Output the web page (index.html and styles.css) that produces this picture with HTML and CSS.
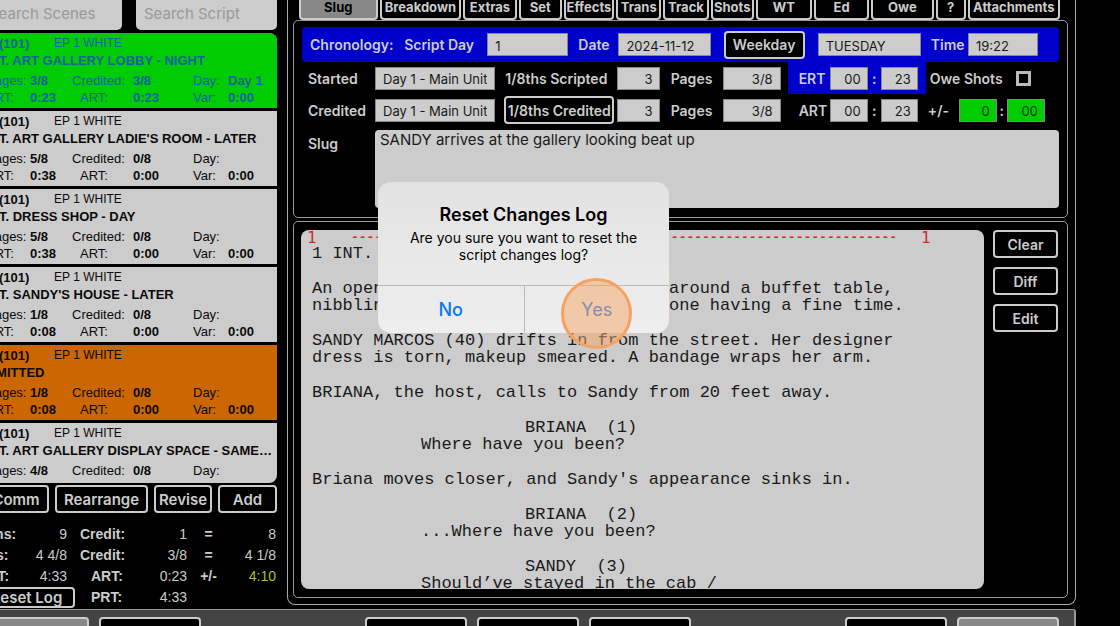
FILE: index.html
```html
<!DOCTYPE html>
<html lang="en">
<head>
<meta charset="utf-8">
<title>Script Log</title>
<link rel="stylesheet" href="styles.css">
</head>
<body>
<div class="workspace">
  <aside class="sidebar">
    <div class="search-row">
      <input class="search" type="search" placeholder="Search Scenes" aria-label="Search Scenes">
      <input class="search" type="search" placeholder="Search Script" aria-label="Search Script">
    </div>
    <ul class="scenes">
      <li class="scene scene-active">
        <div class="scene-meta"><b>(101)</b><span>EP 1 WHITE</span></div>
        <h3 class="scene-title">INT. ART GALLERY LOBBY - NIGHT</h3>
        <div class="scene-data">
          <span>Pages:</span><b>3/8</b><span>Credited:</span><b>3/8</b><span>Day:</span><b>Day 1</b>
          <span>ERT:</span><b>0:23</b><span class="inset">ART:</span><b>0:23</b><span>Var:</span><b>0:00</b>
        </div>
      </li>
      <li class="scene">
        <div class="scene-meta"><b>(101)</b><span>EP 1 WHITE</span></div>
        <h3 class="scene-title">INT. ART GALLERY LADIE'S ROOM - LATER</h3>
        <div class="scene-data">
          <span>Pages:</span><b>5/8</b><span>Credited:</span><b>0/8</b><span>Day:</span><b></b>
          <span>ERT:</span><b>0:38</b><span class="inset">ART:</span><b>0:00</b><span>Var:</span><b>0:00</b>
        </div>
      </li>
      <li class="scene">
        <div class="scene-meta"><b>(101)</b><span>EP 1 WHITE</span></div>
        <h3 class="scene-title">INT. DRESS SHOP - DAY</h3>
        <div class="scene-data">
          <span>Pages:</span><b>5/8</b><span>Credited:</span><b>0/8</b><span>Day:</span><b></b>
          <span>ERT:</span><b>0:38</b><span class="inset">ART:</span><b>0:00</b><span>Var:</span><b>0:00</b>
        </div>
      </li>
      <li class="scene">
        <div class="scene-meta"><b>(101)</b><span>EP 1 WHITE</span></div>
        <h3 class="scene-title">INT. SANDY'S HOUSE - LATER</h3>
        <div class="scene-data">
          <span>Pages:</span><b>1/8</b><span>Credited:</span><b>0/8</b><span>Day:</span><b></b>
          <span>ERT:</span><b>0:08</b><span class="inset">ART:</span><b>0:00</b><span>Var:</span><b>0:00</b>
        </div>
      </li>
      <li class="scene scene-omitted">
        <div class="scene-meta"><b>(101)</b><span>EP 1 WHITE</span></div>
        <h3 class="scene-title">OMITTED</h3>
        <div class="scene-data">
          <span>Pages:</span><b>1/8</b><span>Credited:</span><b>0/8</b><span>Day:</span><b></b>
          <span>ERT:</span><b>0:08</b><span class="inset">ART:</span><b>0:00</b><span>Var:</span><b>0:00</b>
        </div>
      </li>
      <li class="scene">
        <div class="scene-meta"><b>(101)</b><span>EP 1 WHITE</span></div>
        <h3 class="scene-title">INT. ART GALLERY DISPLAY SPACE - SAME…</h3>
        <div class="scene-data">
          <span>Pages:</span><b>4/8</b><span>Credited:</span><b>0/8</b><span>Day:</span><b></b>
        </div>
      </li>
    </ul>
    <div class="scene-actions">
      <button class="btn">Comm</button>
      <button class="btn">Rearrange</button>
      <button class="btn">Revise</button>
      <button class="btn">Add</button>
    </div>
    <div class="stats">
      <b>Scns:</b><span class="num">9</span><b>Credit:</b><span class="num">1</span><b class="sign">=</b><span class="num">8</span>
      <b>Pgs:</b><span class="num">4 4/8</span><b>Credit:</b><span class="num">3/8</span><b class="sign">=</b><span class="num">4 1/8</span>
      <b>ERT:</b><span class="num">4:33</span><b class="inset">ART:</b><span class="num">0:23</span><b class="sign">+/-</b><span class="num ahead">4:10</span>
      <button class="btn reset">Reset Log</button><b class="inset">PRT:</b><span class="num">4:33</span>
    </div>
  </aside>

  <main class="main">
    <nav class="tabs">
      <button class="tab tab-on">Slug</button>
      <button class="tab">Breakdown</button>
      <button class="tab">Extras</button>
      <button class="tab">Set</button>
      <button class="tab">Effects</button>
      <button class="tab">Trans</button>
      <button class="tab">Track</button>
      <button class="tab">Shots</button>
      <button class="tab">WT</button>
      <button class="tab">Ed</button>
      <button class="tab">Owe</button>
      <button class="tab">?</button>
      <button class="tab">Attachments</button>
    </nav>

    <section class="panel details">
      <div class="chrono">
        <span>Chronology:</span>
        <label for="day">Script Day</label>
        <input id="day" class="field" value="1">
        <label class="chrono-label" for="date">Date</label>
        <input id="date" class="field" value="2024-11-12">
        <button class="btn weekday">Weekday</button>
        <input class="field" value="TUESDAY" aria-label="Weekday">
        <label class="chrono-label" for="time">Time</label>
        <input id="time" class="field" value="19:22">
      </div>
      <div class="line">
        <label for="started">Started</label>
        <input id="started" class="field" value="Day 1 - Main Unit">
        <label class="mid" for="scripted">1/8ths Scripted</label>
        <input id="scripted" class="field right" value="3">
        <label class="mid" for="pages1">Pages</label>
        <input id="pages1" class="field right" value="3/8">
        <div class="clock clock-on">
          <label for="ertm">ERT</label>
          <input id="ertm" class="field right" value="00"><span class="mid">:</span><input class="field right" value="23" aria-label="ERT seconds">
        </div>
        <div class="extra">
          <label for="owe">Owe Shots</label>
          <input id="owe" class="check" type="checkbox">
        </div>
      </div>
      <div class="line">
        <label for="credited">Credited</label>
        <input id="credited" class="field" value="Day 1 - Main Unit">
        <button class="btn eighths">1/8ths Credited</button>
        <input class="field right" value="3" aria-label="1/8ths Credited">
        <label class="mid" for="pages2">Pages</label>
        <input id="pages2" class="field right" value="3/8">
        <div class="clock">
          <label for="artm">ART</label>
          <input id="artm" class="field right" value="00"><span class="mid">:</span><input class="field right" value="23" aria-label="ART seconds">
        </div>
        <div class="extra variance">
          <label for="varm">+/-</label>
          <input id="varm" class="field right good" value="0"><span class="mid">:</span><input class="field right good" value="00" aria-label="Variance seconds">
        </div>
      </div>
      <div class="slug">
        <label for="slug">Slug</label>
        <textarea id="slug" class="slug-text">SANDY arrives at the gallery looking beat up</textarea>
      </div>
    </section>

    <section class="panel script-panel">
      <article class="script">
        <div class="log-line"><span>1</span><span class="dashes">----------------------------------------------------------------------</span><span>1</span></div>
        <p>1 INT. ART GALLERY LOBBY - NIGHT</p>
        <p>An open loft. Guests have gathered around a buffet table,
nibbling on fruit and cheese. Everyone having a fine time.</p>
        <p>SANDY MARCOS (40) drifts in from the street. Her designer
dress is torn, makeup smeared. A bandage wraps her arm.</p>
        <p>BRIANA, the host, calls to Sandy from 20 feet away.</p>
        <div class="speech"><p class="cue">BRIANA  (1)</p><p>Where have you been?</p></div>
        <p>Briana moves closer, and Sandy's appearance sinks in.</p>
        <div class="speech"><p class="cue">BRIANA  (2)</p><p>...Where have you been?</p></div>
        <div class="speech"><p class="cue">SANDY  (3)</p><p>Should’ve stayed in the cab /</p></div>
      </article>
      <div class="script-actions">
        <button class="btn">Clear</button>
        <button class="btn">Diff</button>
        <button class="btn">Edit</button>
      </div>
    </section>
  </main>
</div>

<footer class="dock">
  <div class="dock-group"><button class="dock-btn dock-on" aria-label="Dock 1"></button><button class="dock-btn" aria-label="Dock 2"></button></div>
  <div class="dock-group dock-mid"><button class="dock-btn" aria-label="Dock 3"></button><button class="dock-btn" aria-label="Dock 4"></button><button class="dock-btn" aria-label="Dock 5"></button></div>
  <div class="dock-group"><button class="dock-btn" aria-label="Dock 6"></button><button class="dock-btn dock-on" aria-label="Dock 7"></button></div>
</footer>

<div class="alert" role="alertdialog" aria-labelledby="alert-title" aria-describedby="alert-text">
  <div class="alert-body">
    <h2 id="alert-title" class="alert-title">Reset Changes Log</h2>
    <p id="alert-text" class="alert-text">Are you sure you want to reset the<br>script changes log?</p>
  </div>
  <div class="alert-actions">
    <button class="alert-btn">No</button>
    <button class="alert-btn">Yes<span class="tap"></span></button>
  </div>
</div>
</body>
</html>
```

FILE: styles.css
```css
* { box-sizing: border-box; }

body {
  margin: 0;
  height: 100vh;
  overflow: hidden;
  display: flex;
  flex-direction: column;
  background: #000;
  color: #ccc;
  font: 600 14px/17px Inter, "Liberation Sans", sans-serif;
}

h2, h3, p, ul { margin: 0; padding: 0; }
button, input, textarea { font: inherit; color: inherit; margin: 0; border-radius: 0; min-width: 0; }

.workspace { flex: 1; min-height: 0; display: flex; gap: 10px; padding-right: 44px; }

.btn {
  height: 28px;
  padding: 0;
  background: #000;
  border: 2px solid #ccc;
  border-radius: 4px;
  white-space: nowrap;
  overflow: hidden;
}

/* Sidebar */
.sidebar { flex: none; width: 299px; margin-left: -22px; display: flex; flex-direction: column; font-family: "Liberation Sans", Arial, sans-serif; }
.search-row { display: grid; grid-template-columns: 1fr 1fr; gap: 14px; margin: -4px 0 3px 3px; }
.search {
  height: 34px;
  padding: 0 8px;
  border: 0;
  border-radius: 5px;
  background: #ccc;
  font: 400 15px/20px Inter, sans-serif;
  appearance: none;
}
.search::placeholder { color: #999; opacity: 1; }

.scenes {
  flex: 1;
  min-height: 0;
  overflow: hidden;
  list-style: none;
  background: #ccc;
  color: #0a0a0a;
  border-radius: 8px;
  font-size: 13px;
  font-weight: 400;
}
.scene { padding: 2px 0 2px 8px; border-bottom: 3px solid #000; }
.scene:last-child { border-bottom: 0; }
.scene-active { background: #0c0; color: #1763a0; }
.scene-omitted { background: #c60; }
.scene-meta { display: flex; gap: 26px; padding-left: 13px; font-size: 12px; }
.scene-meta b { font-size: 13px; width: 29px; }
.scene-title { font-size: 13px; line-height: 17px; white-space: nowrap; overflow: hidden; text-overflow: ellipsis; }
.scene-data { display: grid; grid-template-columns: 44px 42px 61px 60px 35px 1fr; grid-auto-rows: 17px; margin-top: 3px; }
.scene-data .inset { padding-left: 8px; }

.scene-actions { display: grid; grid-template-columns: 66fr 93fr 58fr 59fr; gap: 6px; margin: 2px 0 11px 5px; font-family: Inter, sans-serif; font-size: 15px; }
.stats { display: grid; grid-template-columns: 44px 45px 73px 47px 43px 1fr; grid-auto-rows: 21px; line-height: 21px; margin-bottom: 1px; padding-right: 1px; }
.stats b:nth-child(6n+3) { padding-left: 13px; }
.stats .inset:nth-child(n) { padding-left: 24px; white-space: nowrap; }
.num { text-align: right; font-weight: 400; }
.sign { text-align: center; }
.ahead { color: #b5bd2b; }
.reset { grid-column: span 2; height: 21px; margin-right: -8px; font-family: Inter, sans-serif; font-size: 15px; line-height: 15px; }

/* Main column */
.main {
  flex: 1;
  min-width: 0;
  display: flex;
  flex-direction: column;
  margin: -8px 0 4px;
  padding: 0 7px 6px 5px;
  border: 1px solid #aaa;
  border-top: 0;
  border-radius: 0 0 8px 8px;
}
.tabs { display: grid; grid-template-columns: 79fr 82fr 54fr 43fr 51fr 45fr 46fr 43fr 57fr 55fr 63fr 30fr 93fr; gap: 2px; margin: 0 8px 0 6px; font-size: 13px; font-weight: 700; }
.tab { height: 28px; padding: 3px 0 0; background: #000; border: 2px solid #ccc; border-radius: 4px; white-space: nowrap; }
.tab-on { background: #888; color: #000; }
.panel { border: 1px solid #999; border-radius: 5px; }

.details { margin-bottom: 3px; padding: 6px 8px 9px; }
.field { width: 100%; height: 23px; padding: 2px 7px 0; border: 1px solid #888; background: #ccc; color: #1a1a1a; font-size: 13px; font-weight: 400; }
.right { text-align: right; }
.mid { text-align: center; }
.chrono {
  display: grid;
  grid-template-columns: 94fr 83fr 81fr 50fr 92fr 107fr 103fr 47fr 70fr;
  align-items: center;
  height: 35px;
  padding: 0 21px 0 8px;
  background: #0000cd;
  border-radius: 4px;
}
.chrono-label { padding-left: 10px; }
.weekday { margin: 0 13px; }
.line {
  display: grid;
  grid-template-columns: 67fr 120fr 122fr 43fr 62fr 58fr 145fr 133fr;
  align-items: center;
  height: 32px;
  padding-left: 6px;
}
.eighths { margin: 0 3px 0 9px; display: flex; justify-content: center; align-items: center; }
.clock { display: grid; grid-template-columns: 31fr 38fr 13fr 37fr; align-items: center; height: 32px; margin-left: 7px; padding: 0 8px 0 11px; }
.clock-on { background: #0000cd; }
.clock .field, .variance .field { padding-right: 6px; }
.extra { display: flex; align-items: center; gap: 13px; padding-left: 4px; }
.variance { display: grid; grid-template-columns: 31px 38px 10px 38px; gap: 0; padding-left: 2px; }
.field.good { background: #0c0; color: #063806; }
.check { appearance: none; width: 15px; height: 15px; border: 3px solid #bbb; background: #000; }
.slug { display: grid; grid-template-columns: 67fr 685fr; padding-left: 6px; margin-top: 4px; }
.slug > label { padding-top: 5px; }
.slug-text { height: 78px; padding: 1px 5px; border: 0; border-radius: 4px; background: #ccc; color: #1a1a1a; font-size: 15px; font-weight: 400; resize: none; }

/* Script */
.script-panel { flex: 1; min-height: 0; display: flex; gap: 9px; padding: 8px 9px 8px 7px; }
.script {
  flex: 1;
  min-width: 0;
  overflow: hidden;
  display: flex;
  flex-direction: column;
  gap: 18px;
  padding: 0 11px;
  border-radius: 8px;
  background: #ccc;
  color: #1a1a1a;
  font: 400 17px/17px "Liberation Mono", "Courier New", monospace;
  white-space: pre;
}
.log-line { display: flex; align-items: center; gap: 24px; height: 15px; margin: 0 0 -18px -5px; color: #d02a2a; font: 400 16px/15px "DejaVu Sans Mono", monospace; }
.log-line > span:first-child { width: 20px; }
.dashes { font: 700 13px/15px "Liberation Mono", monospace; }
.speech { padding-left: 109px; }
.cue { padding-left: 104px; }
.script-actions { flex: none; width: 65px; display: grid; gap: 9px; align-content: start; }

/* Dock */
.dock {
  flex: none;
  display: flex;
  justify-content: space-between;
  height: 17px;
  margin-right: 44px;
  padding: 7px 15px 0 0;
  background: #444;
  border: solid #999;
  border-width: 1px 2px 0 0;
  border-radius: 0 3px 0 0;
  overflow: hidden;
}
.dock-group { display: flex; gap: 10px; }
.dock-group:first-child { margin-left: -13px; }
.dock-mid { margin-left: 10px; }
.dock-btn { width: 102px; height: 28px; background: #000; border: 2px solid #ccc; border-radius: 4px; }
.dock-on { background: #888; }

/* Alert */
.alert {
  position: absolute;
  left: 378px;
  top: 182px;
  width: 291px;
  border-radius: 13px;
  background: linear-gradient(#e2e2e2, #eee);
  color: #000;
  text-align: center;
}
.alert-body { padding: 22px 16px; border-bottom: 1px solid #bbb; }
.alert-title { font-size: 18px; line-height: 22px; font-weight: 600; }
.alert-text { margin-top: 3px; font-size: 14px; font-weight: 400; }
.alert-actions { display: grid; grid-template-columns: 1fr 1fr; }
.alert-btn { position: relative; height: 47px; padding: 0; background: none; border: 0; color: #0a78f0; font-size: 18px; font-weight: 500; }
.alert-btn + .alert-btn { border-left: 1px solid #bbb; font-weight: 400; }
.tap {
  position: absolute;
  left: 36px;
  top: -8px;
  width: 71px;
  height: 71px;
  border: 3px solid #f5a260;
  border-radius: 50%;
  background: rgba(245, 165, 100, 0.5);
}
```
